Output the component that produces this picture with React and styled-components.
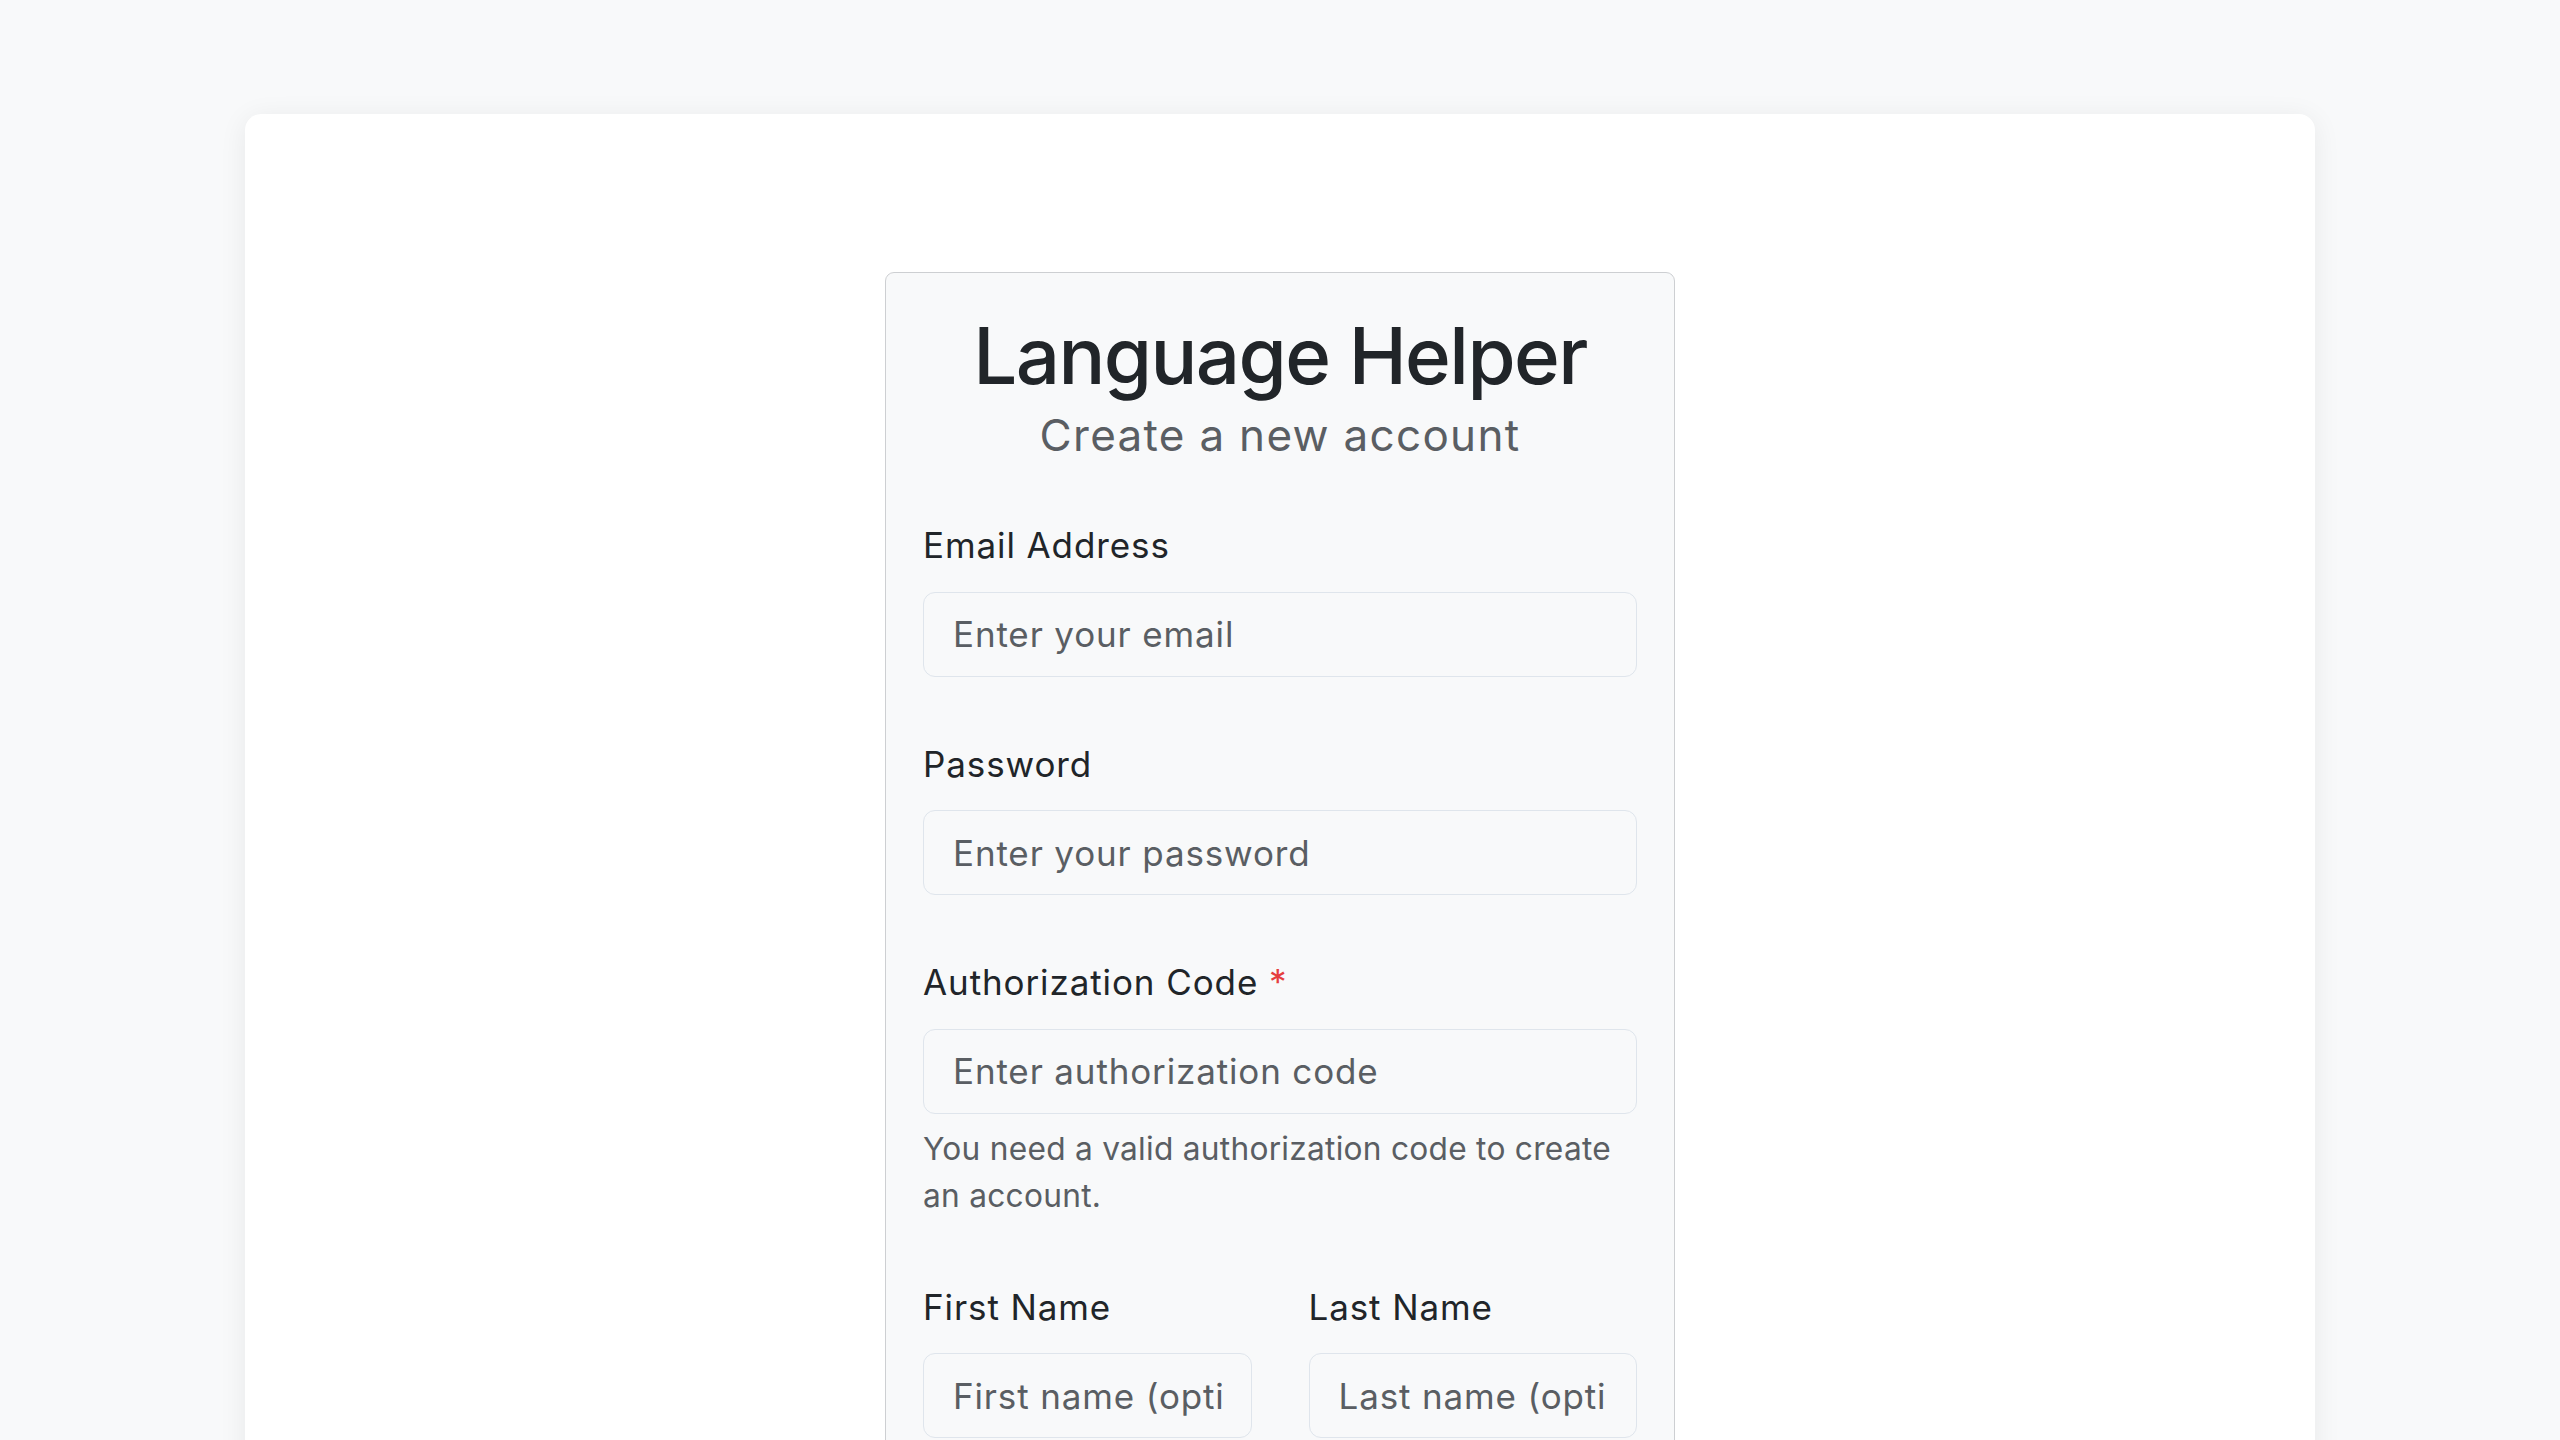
import React from "react";
import styled, { createGlobalStyle } from "styled-components";

const GlobalStyle = createGlobalStyle`
  * {
    box-sizing: border-box;
  }
  body {
    margin: 0;
    background: #f8f9fa;
    font-family: Inter, "Noto Sans", "Liberation Sans", sans-serif;
    color: #212529;
  }
`;

const Page = styled.div`
  padding-top: 114px;
  min-height: 1440px;
`;

const Sheet = styled.main`
  width: 2070px;
  min-height: 1400px;
  margin: 0 auto;
  padding-top: 158px;
  background: #ffffff;
  border-radius: 16px;
  box-shadow: 0 4px 28px rgba(0, 0, 0, 0.07);
`;

const AuthBox = styled.form`
  width: 790px;
  margin: 0 auto;
  padding: 36px 37px;
  background: #f8f9fa;
  border: 1px solid #cdcfd2;
  border-radius: 9px;
`;

const Title = styled.h1`
  margin: 0;
  font-size: 78px;
  line-height: 1.2;
  font-weight: 500;
  letter-spacing: -1.6px;
  text-align: center;
  color: #212529;
`;

const Subtitle = styled.p`
  margin: 0 0 52px;
  font-size: 44px;
  line-height: 64.5px;
  letter-spacing: 1.3px;
  text-align: center;
  color: #5a5e63;
`;

const FormGroup = styled.div`
  margin-bottom: 61px;
`;

const Row = styled.div`
  display: grid;
  grid-template-columns: 1fr 1fr;
  gap: 57px;
`;

const Label = styled.label`
  display: block;
  margin-bottom: 20px;
  font-size: 35px;
  line-height: 52.5px;
  letter-spacing: 0.9px;
  color: #212529;
`;

const Required = styled.span`
  color: #e53e3e;
`;

const Input = styled.input`
  display: block;
  width: 100%;
  height: 85px;
  padding: 0 29px;
  border: 1px solid #dfe5ec;
  border-radius: 12px;
  background: transparent;
  font-family: inherit;
  font-size: 35px;
  letter-spacing: 0.85px;
  color: #212529;
  outline: none;

  &::placeholder {
    color: #5a5e63;
    opacity: 1;
  }
`;

const Help = styled.p`
  margin: 11px 0 0;
  font-size: 31.7px;
  line-height: 47.6px;
  letter-spacing: 0.25px;
  color: #5a5e63;
`;

const App = () => {
  return (
    <>
      <GlobalStyle />
      <Page>
        <Sheet>
          <AuthBox onSubmit={(e) => e.preventDefault()}>
            <Title>Language Helper</Title>
            <Subtitle>Create a new account</Subtitle>

            <FormGroup>
              <Label htmlFor="email">Email Address</Label>
              <Input id="email" type="email" placeholder="Enter your email" />
            </FormGroup>

            <FormGroup>
              <Label htmlFor="password">Password</Label>
              <Input
                id="password"
                type="password"
                placeholder="Enter your password"
              />
            </FormGroup>

            <FormGroup>
              <Label htmlFor="code">
                Authorization Code <Required>*</Required>
              </Label>
              <Input id="code" type="text" placeholder="Enter authorization code" />
              <Help>You need a valid authorization code to create an account.</Help>
            </FormGroup>

            <Row>
              <FormGroup>
                <Label htmlFor="first">First Name</Label>
                <Input id="first" type="text" placeholder="First name (optional)" />
              </FormGroup>
              <FormGroup>
                <Label htmlFor="last">Last Name</Label>
                <Input id="last" type="text" placeholder="Last name (optional)" />
              </FormGroup>
            </Row>
          </AuthBox>
        </Sheet>
      </Page>
    </>
  );
};

export default App;
